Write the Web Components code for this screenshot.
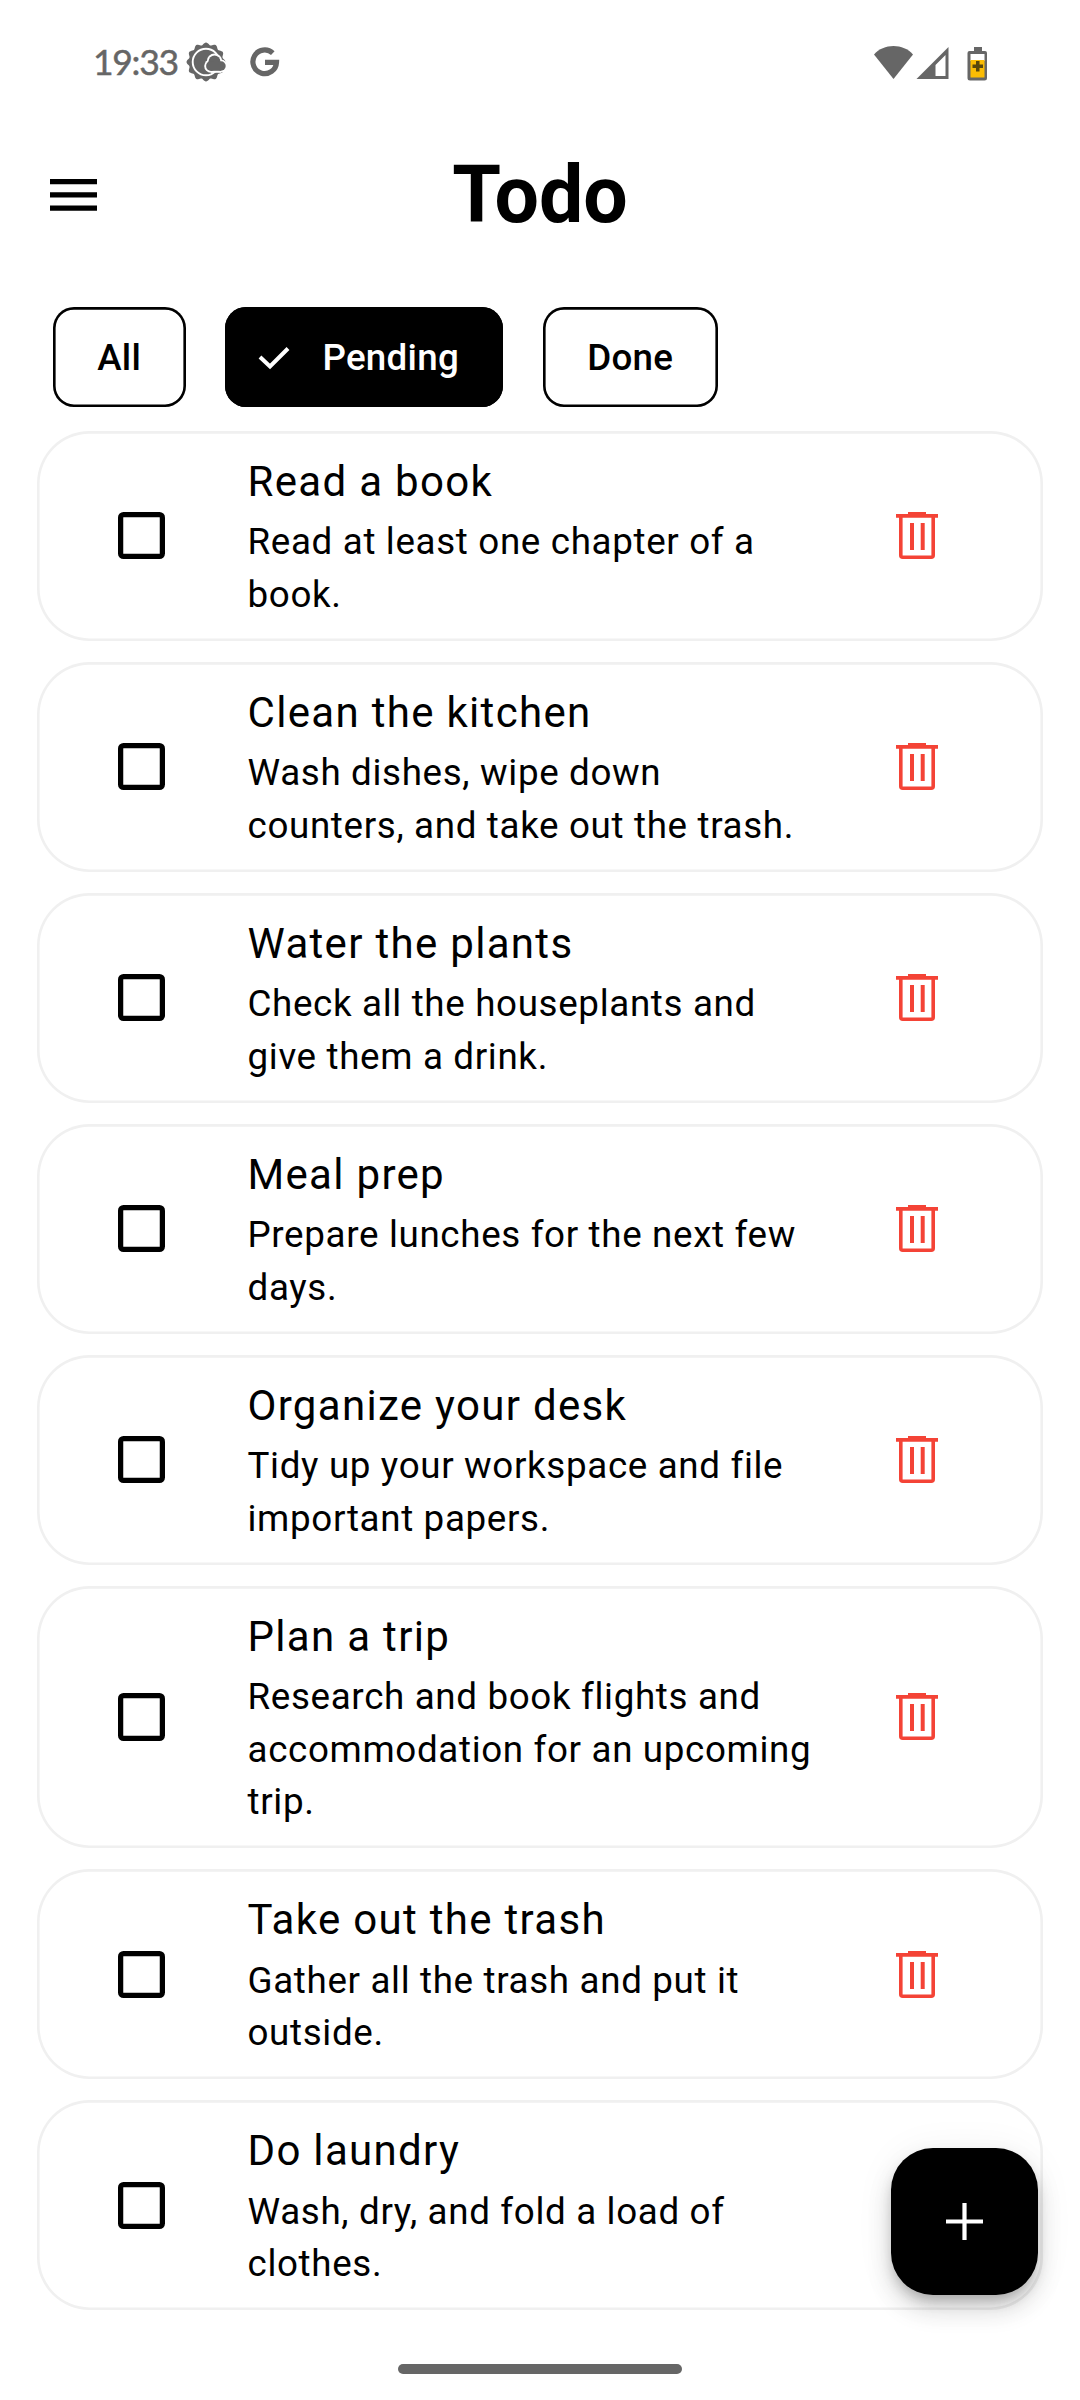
<!DOCTYPE html>
<html lang="en">
<head>
<meta charset="utf-8">
<title>Todo</title>
<style>
html,body{margin:0;padding:0;background:#fff}
body{font-family:Roboto,sans-serif;color:#000}
</style>
</head>
<body>
<todo-app></todo-app>
<script>
const define=(name,html,init)=>customElements.define(name,class extends HTMLElement{
  constructor(){super();this.attachShadow({mode:'open'}).innerHTML=html;}
  connectedCallback(){if(init)init(this,this.shadowRoot);}
});

// Scalloped sun outline with twelve soft points
const sunPath='M'+Array.from({length:144},(_,i)=>{
  const a=i*Math.PI/72,r=18.3+1.2*Math.cos(12*a);
  return (20+r*Math.sin(a)).toFixed(2)+' '+(20-r*Math.cos(a)).toFixed(2);
}).join('L')+'z';

define('status-bar',`<style>
:host{display:flex;height:131px;box-sizing:border-box;padding:0 90px 0 93px;color:#666}
.row{display:flex;height:124px;align-items:center;flex:1}
.time{font:400 35.5px/44px Lato,sans-serif;letter-spacing:-1.3px;width:93px;white-space:nowrap;-webkit-text-stroke:.5px #666}
.gap{flex:1}
svg{display:block;flex:none}
</style>
<div class="row">
<span class="time">19:33</span>
<svg width="41" height="40" viewBox="0 0 41 40"><path fill="#666" d="${sunPath}"/><circle cx="20" cy="20" r="13.300" fill="none" stroke="#fff" stroke-width="1.900"/>
<g fill="#fff"><circle cx="28.500" cy="19.300" r="7.700"/><circle cx="25" cy="24" r="6.800"/><circle cx="35" cy="24" r="6.500"/><path d="M25 20h10v10.800H25z"/></g>
<g fill="#666"><circle cx="28.500" cy="19.300" r="5.900"/><circle cx="25" cy="24" r="4.900"/><circle cx="35" cy="24" r="4.700"/><path d="M25 20h10v8.800H25z"/></g></svg>
<svg style="margin-left:22.500px" width="30" height="30" viewBox="0 0 30 30"><path fill="none" stroke="#666" stroke-width="5.200" d="M22.800 6.200A11.800 11.800 0 1 0 26.500 15.300H15"/></svg>
<span class="gap"></span>
<svg width="117" height="40" viewBox="0 0 117 40">
<path fill="#666" d="M1 12.500C10.500 1 30.500 1 40 12.500L20.500 37z"/>
<path fill="#666" fill-rule="evenodd" d="M43.500 37L75.500 5v32zM72.500 13L62.500 23v11h10z"/>
<path fill="#666" d="M101 5h8v4h3q2 0 2 2v25q0 2.500-2.500 2.500H97q-2.500 0-2.500-2.500V11q0-2 2-2h4.500z"/><path fill="#fff" d="M97.500 12h14v7h-14z"/><path fill="#fbbc04" d="M97.500 18h14v17.500h-14z"/><path fill="#59470b" d="M103 19h3.500v3.500h3.500V26h-3.500v3.500H103V26h-3.500v-3.500h3.500z"/>
</svg>
</div>`);

define('app-header',`<style>
:host{display:grid;grid-template-columns:1fr auto 1fr;align-items:center;height:127px;padding:0 50px}
h1{margin:0;font:700 78.750px/92px Roboto,sans-serif;letter-spacing:0}
svg{display:block}
</style>
<svg width="47" height="32" viewBox="0 0 47 32"><path d="M0 0h47v5.250H0zM0 13.300h47v5.250H0zM0 26.500h47v5.250H0z"/></svg>
<h1><slot></slot></h1><span></span>`);

define('filter-chip',`<style>
:host{display:flex;box-sizing:border-box;height:100px;box-shadow:inset 0 0 0 2.625px #000;border-radius:21px;align-items:center;justify-content:center;font:500 36.750px/52px Roboto,sans-serif;letter-spacing:.26px;flex:none;padding-top:1px}
:host([selected]){background:#000;color:#fff;padding-right:11px}
svg{display:none;flex:none}
:host([selected]) svg{display:block;margin-right:32px}
</style>
<svg width="32" height="24" viewBox="0 0 32 24"><path d="M2 11l10 9.500L30 2.500" fill="none" stroke="#fff" stroke-width="4"/></svg>
<slot></slot>`);

define('todo-item',`<style>
:host{display:flex;box-sizing:border-box;box-shadow:inset 0 0 0 2.625px #f0f0f0;border-radius:52.500px;align-items:center}
.box{width:47.250px;height:47.250px;box-sizing:border-box;box-shadow:inset 0 0 0 5.250px #000;border-radius:5.500px;margin-left:81.250px;margin-right:82.250px;flex:none}
.text{width:570px;flex:none;padding:21.300px 0 19.500px}
h2{margin:0 0 5.200px;font:400 42px/59px Roboto,sans-serif;letter-spacing:1.3125px}
p{margin:0;font:400 36.750px/52.500px Roboto,sans-serif;letter-spacing:.65625px}
svg{display:block;flex:none;margin-left:78.500px}
</style>
<div class="box"></div>
<div class="text"><h2></h2><p><slot></slot></p></div>
<svg width="42" height="47" viewBox="0 0 42 47" fill="#f44336"><path d="M12 0h18v2H42v3.800H0V2h12zM14 11h4v27h-4zM24.700 11h4v27h-4z"/><path d="M4.800 4v39.200q0 2 2 2h28.400q2 0 2-2V4" fill="none" stroke="#f44336" stroke-width="3.600"/></svg>`,
(el,r)=>{r.querySelector('h2').textContent=el.getAttribute('heading');});

define('add-button',`<style>
:host{display:flex;width:147px;height:147px;border-radius:42px;background:#000;align-items:center;justify-content:center;box-shadow:0 8px 13px -3px rgba(0,0,0,.22),0 15px 26px rgba(0,0,0,.14),0 3px 40px rgba(0,0,0,.06)}
</style>
<svg width="37" height="37" viewBox="0 0 37 37"><path fill="#fff" d="M16.400 0h4.200v16.400H37v4.200H20.600V37h-4.200V20.600H0v-4.200h16.400z"/></svg>`);

define('todo-app',`<style>
:host{display:flex;flex-direction:column;width:1080px;height:2400px;position:relative;background:#fff;overflow:hidden}
.chips{display:flex;gap:39.375px;padding:49px 52.500px 0;height:123.750px}
.list{display:flex;flex-direction:column;gap:21px;padding:0 36.750px}
add-button{position:absolute;left:891px;top:2148px}
.nav{width:284px;height:10px;border-radius:5px;background:#666;margin:auto auto 26px}
</style>
<status-bar></status-bar>
<app-header>Todo</app-header>
<div class="chips">
<filter-chip style="width:133.200px">All</filter-chip>
<filter-chip selected style="width:278.300px">Pending</filter-chip>
<filter-chip style="width:175px">Done</filter-chip>
</div>
<div class="list">
<todo-item heading="Read a book">Read at least one chapter of a book.</todo-item>
<todo-item heading="Clean the kitchen">Wash dishes, wipe down counters, and take out the trash.</todo-item>
<todo-item heading="Water the plants">Check all the houseplants and give them a drink.</todo-item>
<todo-item heading="Meal prep">Prepare lunches for the next few days.</todo-item>
<todo-item heading="Organize your desk">Tidy up your workspace and file important papers.</todo-item>
<todo-item heading="Plan a trip">Research and book flights and accommodation for an upcoming trip.</todo-item>
<todo-item heading="Take out the trash">Gather all the trash and put it outside.</todo-item>
<todo-item heading="Do laundry">Wash, dry, and fold a load of clothes.</todo-item>
</div>
<div class="nav"></div>
<add-button></add-button>`);
</script>
</body>
</html>
